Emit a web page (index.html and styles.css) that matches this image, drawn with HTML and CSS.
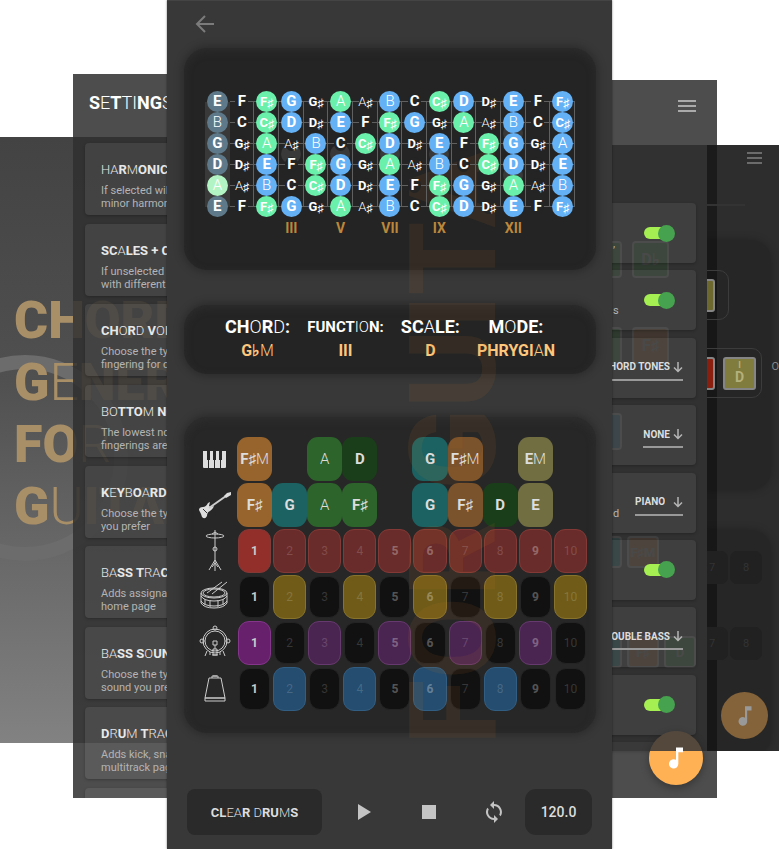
FILE: index.html
```html
<!DOCTYPE html>
<html lang="en">
<head>
<meta charset="utf-8">
<title>Chord Generator for Guitar</title>
<link rel="stylesheet" href="styles.css">
</head>
<body>
<div class="stage">
  <section class="window splash">
    <div class="ring"></div>
    <h1 class="display"><span>CHORD</span><span>G<i>E</i>NER</span><span>FO<i>R</i></span><span>G<i>U</i>ITAR</span></h1>
  </section>

  <section class="window home-back" aria-hidden="true">
    <div class="tiles"><span class="tile green"></span><span class="tile green">D♭</span></div>
    <div class="tiles"><span class="tile green"></span><span class="tile orange">F♯</span></div>
    <div class="tiles"><span class="tile blue"></span></div>
    <div class="tiles small"><span class="tile teal"></span><span class="tile orange">F♯M</span></div>
    <div class="tiles small"><span class="tile teal"></span><span class="tile orange">F♯</span><span class="tile green">D</span></div>
  </section>

  <section class="window settings">
    <header><h2 class="display" data-mix="SeTtiNGs"></h2></header>
    <div class="options" id="options"></div>
  </section>

  <section class="window controls">
    <header><button class="menu" aria-label="Menu"></button></header>
    <div class="rows">
      <div class="row"><span class="tail">,</span><input type="checkbox" class="toggle" aria-label="Harmonic" checked></div>
      <div class="row"><span class="tail">s</span><input type="checkbox" class="toggle" aria-label="Scales and chords" checked></div>
      <div class="row pick"><label class="field"><select aria-label="Chord voicing"><option>CHORD TONES</option></select><svg viewBox="0 0 10 12"><path d="M5 1v9M1 6.500l4 4 4-4"/></svg></label></div>
      <div class="row pick"><label class="field"><select aria-label="Bottom note"><option>NONE</option></select><svg viewBox="0 0 10 12"><path d="M5 1v9M1 6.500l4 4 4-4"/></svg></label></div>
      <div class="row pick"><span class="tail">d</span><label class="field wide"><select aria-label="Keyboard sound"><option>PIANO</option></select><svg viewBox="0 0 10 12"><path d="M5 1v9M1 6.500l4 4 4-4"/></svg></label></div>
      <div class="row"><span></span><input type="checkbox" class="toggle" aria-label="Bass track" checked></div>
      <div class="row pick"><label class="field"><select aria-label="Bass sound"><option>DOUBLE BASS</option></select><svg viewBox="0 0 10 12"><path d="M5 1v9M1 6.500l4 4 4-4"/></svg></label></div>
      <div class="row"><span></span><input type="checkbox" class="toggle" aria-label="Drum track" checked></div>
      <div class="row peek"></div>
    </div>
    <button class="fab split" aria-label="Play chords"><svg viewBox="0 0 24 24"><path d="M12 3v10.550A4 4 0 1 0 14 17V7h4V3z"/></svg></button>
  </section>

  <section class="window home">
    <header><button class="menu dim" aria-label="Open menu"></button></header>
    <hr>
    <div class="home-card">
      <div class="frame first"><span class="key yellow"></span></div>
      <div class="frame"><span class="key red"></span><span class="key yellow full"><small>I</small>D</span></div>
      <span class="edge">O</span>
    </div>
    <div class="home-card lower">
      <div class="pads"><span>7</span><span>8</span></div>
      <div class="pads"><span>7</span><span>8</span></div>
    </div>
    <button class="fab faded" aria-label="Play"><svg viewBox="0 0 24 24"><path d="M12 3v10.550A4 4 0 1 0 14 17V7h4V3z"/></svg></button>
  </section>

  <main class="player">
    <header><a href="#" aria-label="Back"><svg viewBox="0 0 20 20"><path d="M19 10H2M10 2l-8 8 8 8"/></svg></a></header>
    <section class="card neck">
      <div class="board" id="board"></div>
      <div class="marks display" id="marks"></div>
    </section>
    <section class="card facts display">
      <div><span class="name big" data-mix="CHoRd:"></span><span class="value">G♭<i>M</i></span></div>
      <div><span class="name" data-mix="FUNCTioN:"></span><span class="value">III</span></div>
      <div><span class="name big" data-mix="SCaLE:"></span><span class="value">D</span></div>
      <div><span class="name big" data-mix="MoDE:"></span><span class="value" data-mix="PHRYGIaN"></span></div>
    </section>
    <section class="card tracks" id="tracks"></section>
    <footer>
      <button class="clear display" data-mix="CLeaR dRUmS"></button>
      <div class="transport">
        <button class="icon" aria-label="Play"><svg viewBox="0 0 24 24"><path d="M6 4v16l13-8z"/></svg></button>
        <button class="icon" aria-label="Stop"><svg viewBox="0 0 24 24"><path d="M5 5h14v14H5z"/></svg></button>
        <button class="icon" aria-label="Loop"><svg viewBox="0 0 24 24"><path d="M12 4V1L8 5l4 4V6a6 6 0 0 1 5.250 8.800l1.460 1.460A8 8 0 0 0 12 4zm0 14a6 6 0 0 1-5.250-8.800L5.290 7.740A8 8 0 0 0 12 20v3l4-4-4-4z"/></svg></button>
      </div>
      <input class="tempo" type="text" value="120.0" aria-label="Tempo">
    </footer>
    <div class="ghost display" aria-hidden="true">FOR GUITA</div>
  </main>
</div>
<script src="app.js"></script>
</body>
</html>
```
FILE: styles.css
```css
* { box-sizing: border-box; }
body { margin: 0; background: #fff; font-family: Roboto, sans-serif; color: #ddd; }
button, input, select { font: inherit; color: inherit; border: 0; padding: 0; margin: 0; background: none; }
h1, h2, h3, p { margin: 0; }
i { font-style: normal; font-weight: 300; }
.display { font-family: Roboto, sans-serif; font-weight: 700; }
.stage { position: relative; min-height: 100vh; overflow: hidden; }
.window { position: absolute; overflow: hidden; display: flex; flex-direction: column; }

/* splash */
.splash { left: 0; top: 137px; width: 300px; height: 606px; background: linear-gradient(#434343, #505050 40%, #828282); justify-content: center; }
.splash h1 { position: relative; font-size: 52px; font-weight: 900; line-height: 62px; padding: 0 0 52px 14px; color: #a98f68; }
.splash h1 span { display: block; }
.ring { position: absolute; left: -78px; top: 218px; width: 206px; height: 206px; border: 14px solid #6c6c6c; border-radius: 50%; }

/* dimmed home screen under the settings */
.home-back { right: 72px; top: 145px; width: 120px; height: 606px; padding-top: 96px; background: #3c3c3c; display: grid; grid-template-rows: 86px 86px 123px 100px auto; }
.tiles { display: flex; gap: 10px; }
.tile { width: 37px; height: 37px; border: 2px solid #999; border-radius: 4px; display: grid; place-items: center; font-size: 16px; font-weight: 700; color: #8a8a8a; flex: none; }
.tiles .tile:first-child { width: 35px; }
.tiles.small { gap: 5px; }
.small .tile { width: 32px; height: 32px; font-size: 13px; }
.green { background: #2c7a2c; }
.orange { background: #a0602e; }
.blue { background: #2d6f90; }
.teal { background: #1c8080; }

/* settings list */
.settings { left: 73px; top: 74px; width: 200px; height: 724px; background: rgba(48, 48, 48, .86); }
.settings header { height: 69px; padding: 17px 16px; }
.settings h2 { font-size: 18px; line-height: 24px; color: #fff; }
.options { flex: 1; display: flex; flex-direction: column; justify-content: space-between; padding-left: 12px; }
.option { height: 72px; padding: 19px 16px 0; border-radius: 4px; background: rgba(255, 255, 255, .08); box-shadow: 0 1px 3px rgba(0, 0, 0, .25); white-space: nowrap; }
.option h3 { font-size: 13px; line-height: 15px; margin-bottom: 7px; color: #e8e8e8; }
.option p { font-size: 11px; line-height: 13px; color: #b4b4b4; }
.option.stub { height: 10px; border-radius: 4px 4px 0 0; padding: 0; }

/* settings values */
.controls { right: 62px; top: 80px; width: 117px; height: 718px; background: rgba(48, 48, 48, .86); }
.controls header { height: 123px; flex: none; padding: 20px 21px; display: flex; justify-content: flex-end; }
.menu { width: 18px; height: 13px; background: linear-gradient(#aaa 2px, transparent 2px 5px, #aaa 5px 7px, transparent 7px 10px, #aaa 10px 12px, transparent 12px); }
.rows { flex: 1; display: flex; flex-direction: column; justify-content: space-between; padding: 0 21px 47px 0; }
.row { height: 60px; padding: 0 21px 0 13px; border-radius: 4px; background: rgba(255, 255, 255, .07); display: flex; align-items: center; justify-content: space-between; box-shadow: 0 1px 3px rgba(0, 0, 0, .25); }
.row.pick { padding-right: 13px; justify-content: flex-end; }
.row.peek { height: 9px; opacity: .6; }
.tail { font-size: 11px; color: #b4b4b4; align-self: flex-end; padding-bottom: 13px; margin-right: auto; }
.toggle { appearance: none; width: 31px; height: 17px; border-radius: 9px; display: flex; align-items: center; }
.toggle::before { content: ""; width: 24px; height: 12px; border-radius: 6px; background: #a6ef52; }
.toggle::after { content: ""; width: 17px; height: 17px; margin-left: -10px; border-radius: 50%; background: #47a24f; flex: none; }
.field { display: flex; align-items: center; justify-content: space-between; gap: 3px; height: 26px; border-bottom: 2px solid #999; flex: none; }
.field.wide { width: 48px; }
.field select { appearance: none; field-sizing: content; font-size: 10px; font-weight: 700; color: #ddd; }
.field svg { width: 10px; height: 12px; fill: none; stroke: #b5b5b5; stroke-width: 1.500; }
.fab { position: absolute; border-radius: 50%; display: grid; place-items: center; }
.fab svg { width: 28px; height: 28px; fill: #fff; }
.split { right: 14px; bottom: 13px; width: 54px; height: 54px; background: linear-gradient(#54483c 20px, #ffb154 20px); box-shadow: 0 3px 8px rgba(0, 0, 0, .3); }

/* home screen at the far right */
.home { right: 0; top: 145px; width: 72px; height: 606px; background: rgba(22, 22, 22, .9); }
.home header { height: 59px; padding: 7px 17px; display: flex; justify-content: flex-end; flex: none; }
.menu.dim { width: 15px; opacity: .5; }
.home hr { width: 38px; margin: 0; border: 0; border-top: 2px solid #333; flex: none; }
.home-card { position: relative; margin: 34px 8px 0 -20px; padding: 30px 9px 0 0; height: 250px; border-radius: 20px; background: rgba(0, 0, 0, .14); box-shadow: 0 0 8px rgba(0, 0, 0, .25); flex: none; }
.home-card.lower { margin-top: 40px; padding-top: 21px; height: 226px; }
.frame { height: 50px; border: 1px solid #3c3c3c; border-radius: 10px; display: flex; align-items: center; justify-content: flex-end; gap: 8px; padding-right: 5px; }
.frame.first { margin: 0 33px 28px 0; padding-right: 13px; }
.frame .key { width: 33px; height: 33px; border: 2px solid #858585; border-radius: 3px; text-align: center; font-size: 14px; font-weight: 700; line-height: 12px; color: #b5b07a; flex: none; }
.key small { display: block; font-size: 9px; }
.key.yellow { background: #6c682e; }
.key.yellow.full { background: #7f7c3e; }
.key.red { background: #8a1f10; }
.edge { position: absolute; right: -8px; top: 120px; font-size: 11px; color: #888; }
.pads { display: flex; gap: 2px; justify-content: flex-end; margin-bottom: 43px; }
.pads span { width: 32px; height: 33px; border-radius: 7px; background: #212121; color: #333; font-size: 11px; display: grid; place-items: center; }
.faded { right: 11px; bottom: 12px; width: 47px; height: 47px; background: #84633a; }
.faded svg { width: 26px; height: 26px; fill: #999; }

/* player */
.player { position: relative; margin: 0 167px; min-height: 100vh; background: #383838; padding: 0 16px 0 17px; display: flex; flex-direction: column; box-shadow: 0 0 2px rgba(0, 0, 0, .5); border-top: 1px solid #444; }
.player header { height: 47px; padding: 13px 11px; }
.player header svg { width: 20px; height: 20px; fill: none; stroke: #7b7b7b; stroke-width: 2; }
.card { border-radius: 24px; background: #242424; box-shadow: 0 0 8px 2px rgba(0, 0, 0, .25), inset 0 3px 8px rgba(60, 60, 60, .35); }
.neck { height: 222px; padding: 43px 21px 0; }
.board { display: grid; grid-template-columns: repeat(15, 1fr); grid-auto-rows: 21px; font-size: 15px; font-weight: 700; color: #fff; position: relative; z-index: 1; }
.fret { position: relative; display: grid; place-items: center; background: linear-gradient(#606060, #606060) 0 50% / 100% 1px no-repeat, linear-gradient(#606060, #606060) 100% 0 / 1px 100% no-repeat; }
.fret.top { background-size: 100% 1px, 1px 50%; background-position: 0 50%, 100% 100%; }
.fret.end { background-size: 100% 1px, 1px 50%; background-position: 0 50%, 100% 0; }
.fret.open { background: #393939; }
.fret.open.top { background: linear-gradient(transparent 50%, #393939 50%); }
.fret.open.end { background: linear-gradient(#393939 50%, transparent 50%); }
.note { width: 21px; height: 21px; border-radius: 50%; z-index: 1; background: #242424; background-clip: content-box; padding: 3px 4px; line-height: 15px; white-space: nowrap; display: flex; justify-content: center; }
.note.b, .note.g, .note.s, .note.l { background-clip: border-box; }
.note sub { font-size: 12px; line-height: 18px; vertical-align: baseline; }
.note.sharp { font-size: 13px; }
.note.b { background-color: #64b1f6; }
.note.g { background-color: #6bf0ab; }
.note.s { background-color: #5e7a8a; }
.note.l { background-color: #b2f4c4; }
.inlay::after { content: ""; position: absolute; left: 2px; top: 11px; width: 20px; height: 20px; border-radius: 50%; background: #393939; z-index: 0; }
.marks { display: grid; grid-template-columns: repeat(15, 1fr); margin-top: 2px; font-size: 14px; line-height: 18px; text-align: center; color: #bd873a; }
.facts { margin-top: 35px; height: 69px; padding: 10px 41px 0; display: flex; justify-content: space-between; text-align: center; white-space: nowrap; }
.name { display: block; font-size: 15px; line-height: 24px; color: #fff; }
.name.big { font-size: 18px; }
.value { display: block; font-size: 16px; line-height: 20px; margin-top: 2px; color: #fdc77c; }
.tracks { margin-top: 43px; padding: 20px 8px 22px 14px; display: grid; grid-template-columns: 39px repeat(10, 1fr); grid-auto-rows: 44px; row-gap: 2px; background: #272727; }
.tracks svg { width: 34px; height: 44px; fill: none; stroke: #ccc; stroke-width: 1; }
.tracks svg .solid { fill: #ddd; stroke: none; }
.chip { border-radius: 11px; font-weight: 700; font-size: 15px; color: #ddd; }
.pad { margin: 0 1px; border: 1px solid #242424; border-radius: 11px; font-size: 12px; font-weight: 400; color: rgba(255, 255, 255, .17); background: #111; }
.pad:not(.c) { margin: 1px 2px; }
.pad.mid { color: rgba(255, 255, 255, .3); font-weight: 700; }
.pad.one { color: #ccc; font-weight: 700; }
.o { background: #97642e; } .gr { background: #2c642c; } .dk { background: #1b3e1a; } .te { background: #1c6262; } .br { background: #7a522b; } .ol { background: #716e42; }
.red-pad { background: #6a2c2a; border-color: #833936; } .red-pad.one { background: #932f2b; }
.yel-pad { background: #705c18; border-color: #88732c; }
.pur-pad { background: #4b2552; border-color: #663a6e; } .pur-pad.one { background: #66206c; border-color: #83368a; }
.blu-pad { background: #244d6f; border-color: #325e83; }
.player footer { margin-top: 56px; padding: 0 4px 14px 3px; display: flex; align-items: center; }
.transport { flex: 1; display: flex; justify-content: space-between; padding: 0 17px 0 28px; }
.clear { width: 135px; height: 46px; border-radius: 8px; background: #2a2a2a; font-size: 13px; }
.icon { width: 28px; height: 28px; }
.icon svg { width: 24px; height: 24px; fill: #c4c4c4; display: block; margin: auto; }
.tempo { width: 67px; height: 46px; border-radius: 11px; background: #2a2a2a; text-align: center; font-size: 14px; font-weight: 500; }
.ghost { position: absolute; left: 217px; bottom: 104px; writing-mode: vertical-rl; transform: rotate(180deg); font-size: 120px; line-height: 140px; color: rgba(200, 120, 40, .1); pointer-events: none; white-space: nowrap; }
```
FILE: app.js
```js
// Lettering alternates heavy and light glyphs: lower case in the source marks a light one.
const mix = s => [...s].map(c => (c >= 'a' && c <= 'z') ? '<i>' + c.toUpperCase() + '</i>' : c).join('');
document.querySelectorAll('[data-mix]').forEach(el => { el.innerHTML = mix(el.dataset.mix); el.removeAttribute('data-mix'); });

const options = [
  ['haRmONIC', 'If selected will use', 'minor harmonic'],
  ['SCaLES + C', 'If unselected', 'with different'],
  ['CHoRd VoICING', 'Choose the type of', 'fingering for chords'],
  ['boTTOm NoTE', 'The lowest note', 'fingerings are'],
  ['KeYbOaRD', 'Choose the type', 'you prefer'],
  ['baSS TraCK', 'Adds assignable', 'home page'],
  ['baSS SoUND', 'Choose the type', 'sound you prefer'],
  ['DrUm TraCK', 'Adds kick, snare', 'multitrack page']
];
document.getElementById('options').innerHTML = options.map(o =>
  `<article class="option"><h3 class="display">${mix(o[0])}</h3><p>${o[1]}<br>${o[2]}</p></article>`).join('') + '<div class="option stub"></div>';

const scale = ['E', 'F', 'F♯', 'G', 'G♯', 'A', 'A♯', 'B', 'C', 'C♯', 'D', 'D♯'];
const strings = [
  ['E', 's-gb-g-b-gb-b-b'], ['B', 's-gb-b-gb-g-b-b'], ['G', 's-g-b-gb-b-gb-b'],
  ['D', 's-b-gb-g-b-gb-b'], ['A', 'l-b-gb-b-gb-g-b'], ['E', 's-gb-g-b-gb-b-b']
];
const inlays = { 2: [3, 5, 7, 9], 1: [12], 3: [12] };
document.getElementById('board').innerHTML = strings.map(([open, tones], r) =>
  [...tones].map((t, f) => {
    const n = scale[(scale.indexOf(open) + f) % 12];
    const light = n[0] === 'A' || n[0] === 'B';
    const letter = light ? `<i>${n[0]}</i>` : n[0];
    const cls = ['fret', f ? '' : 'open', r ? '' : 'top', r === 5 ? 'end' : '', (inlays[r] || []).includes(f) ? 'inlay' : ''].join(' ');
    return `<div class="${cls}"><span class="note ${t === '-' ? '' : t} ${n[1] ? 'sharp' : ''}">${letter}${n[1] ? '<sub>♯</sub>' : ''}</span></div>`;
  }).join('')).join('');
const marks = { 3: 'III', 5: 'V', 7: 'VII', 9: 'IX', 12: 'XII' };
document.getElementById('marks').innerHTML = Array.from({ length: 15 }, (_, i) => `<span>${marks[i] || ''}</span>`).join('');

const icons = {
  piano: '<path class="solid" d="M5 14h4v9h1v8H6q-1 0-1-1zM11 23h1v-9h3v9h1v8h-5zM17 23h1v-9h3v9h1v8h-5zM23 23h1v-9h4v16q0 1-1 1h-4z"/>',
  guitar: '<path class="solid" d="M1 27q0-3 4-3 3 0 5-4l2-1-1 4 2 1 3-1q-1 3-4 5-3 1-3 5-2 4-5 1l-1-3z"/><path d="M11 25L28 13" stroke-width="2"/><path class="solid" d="M26 13l3-3 4-1v3l-5 3z"/><path d="M5 26l4 4" stroke="#333"/>',
  hihat: '<path d="M17 1v41M11 41l6-10 6 10M14 38l3-4 3 4"/><ellipse cx="17" cy="7" rx="9" ry="2"/><path d="M14 5l3-2 3 2"/><circle cx="17" cy="20" r="2"/>',
  snare: '<ellipse cx="16" cy="18" rx="13" ry="5"/><ellipse cx="16" cy="18" rx="11" ry="4"/><path d="M3 18v10q3 5 13 5t13-5V18M3 21q3 5 13 5t13-5M3 26q3 5 13 5t13-5M7 24v6M12 25v7M20 25v7M25 24v6M9 18L24 7M14 19L29 7"/>',
  kick: '<circle cx="17" cy="20" r="12"/><circle cx="17" cy="20" r="10"/><circle cx="17" cy="7" r="2"/><circle cx="4" cy="20" r="2"/><circle cx="30" cy="20" r="2"/><path d="M15 20h4v4h-4zM17 24v4M15 28h4v6h-4zM9 30l-2 5M25 30l2 5M12 31v3M22 31v3M14 34h6"/>',
  bell: '<path d="M11 11h12l4 20H7zM7 31h20v3H7zM14 11V9h6v2M15 9h4"/>'
};
const tonal = {
  piano: ['o F♯m', '', 'gr a', 'dk D', '', 'te G', 'br F♯m', '', 'ol Em', ''],
  guitar: ['o F♯', 'te G', 'gr a', 'gr F♯', '', 'te G', 'br F♯', 'dk D', 'ol E', '']
};
const even = n => n % 2 === 0;
const drums = {
  hihat: ['red-pad', () => true],
  snare: ['yel-pad', even],
  kick: ['pur-pad', n => !even(n)],
  bell: ['blu-pad', n => even(n) && n < 10]
};
let html = '';
for (const k in tonal) {
  html += `<svg viewBox="0 0 34 44" aria-hidden="true">${icons[k]}</svg>` + tonal[k].map(c => {
    if (!c) return '<span></span>';
    const [cls, text] = c.split(' ');
    return `<button class="chip ${cls}">${mix(text)}</button>`;
  }).join('');
}
for (const k in drums) {
  html += `<svg viewBox="0 0 34 44" aria-hidden="true">${icons[k]}</svg>`;
  for (let n = 1; n <= 10; n++) {
    const on = drums[k][1](n);
    html += `<button class="pad ${on ? 'c ' + drums[k][0] : ''} ${n === 1 ? 'one' : [5, 6, 9].includes(n) ? 'mid' : ''}">${n}</button>`;
  }
}
document.getElementById('tracks').innerHTML = html;
```
